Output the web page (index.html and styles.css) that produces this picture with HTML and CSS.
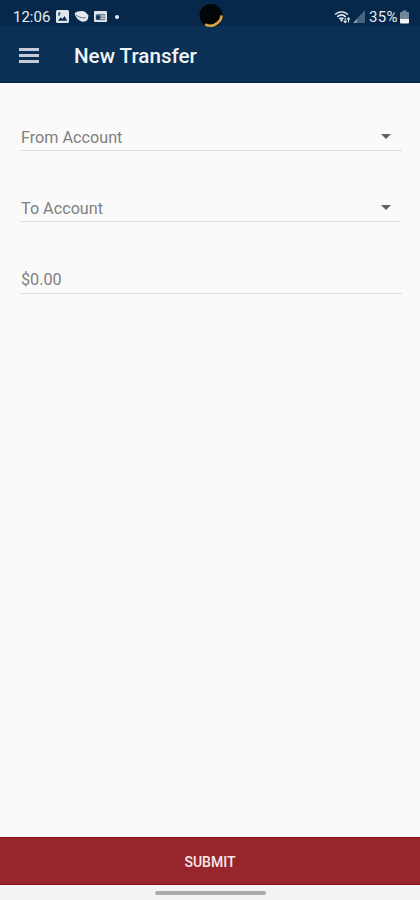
FILE: index.html
```html
<!DOCTYPE html>
<html lang="en">
<head>
  <meta charset="UTF-8" />
  <meta name="viewport" content="width=device-width, initial-scale=1" />
  <title>New Transfer</title>
  <link rel="stylesheet" href="styles.css">
</head>
<body>

  <!-- Status Bar -->
  <div class="status-bar">
    <span class="time">12:06</span>
    <svg class="icon-photo" width="13" height="13" viewBox="0 0 13 13" aria-hidden="true">
      <rect width="13" height="13" rx="1.5" fill="#dfe5ec"/>
      <path d="M2 10.8L4.7 7.2L6.4 9L8.5 6L11.2 10.8Z" fill="#0a2c4e"/>
      <path d="M2.2 2.2H4.4V5L2.2 6.5Z" fill="#52677f"/>
    </svg>
    <svg class="icon-app" width="15" height="13" viewBox="0 0 15 13" aria-hidden="true">
      <path d="M.5 3.5Q2.5 1 6 1.2Q9 .2 11.5 2.3L14.5 5.5L13.7 9.5Q11.5 12.5 7.5 11.5Q2.5 9.8 .5 3.5Z" fill="#e4e9ef"/>
      <path d="M2 4.5Q5 8.3 11.8 7.8" fill="none" stroke="#657a90" stroke-width="1"/>
    </svg>
    <svg class="icon-card" width="13" height="11" viewBox="0 0 13 11" aria-hidden="true">
      <rect width="13" height="11" rx="1" fill="#dfe5ec"/>
      <path d="M1.8 3H11.2V9.2H1.8Z" fill="#71849a"/>
      <path d="M2.2 4.5H5.8V8.5H2.2Z" fill="#0f3356"/>
      <path d="M7 5H10.7M7 7.3H10.7" stroke="#dfe5ec" stroke-width="1"/>
    </svg>
    <span class="dot"></span>

    <div class="status-right">
      <svg width="17" height="14" viewBox="0 0 17 14" aria-hidden="true">
        <path d="M1 4.5Q7.5-1 14 4.5M3.2 6.8Q7.5 3 11.8 6.8M5.2 9Q7.5 7 9.5 9" fill="none" stroke="#dfe5ec" stroke-width="1.6"/>
        <path d="M5.8 9.8L7.5 8.8L9 10L7.8 12Z" fill="#dfe5ec"/>
        <path d="M11.2 7.8V12.5M9.7 11L11.2 12.7L12.7 11M14.5 12.5V8M13 9.5L14.5 7.8L16 9.5" fill="none" stroke="#dfe5ec" stroke-width="1.1"/>
      </svg>
      <svg class="icon-signal" width="12" height="13" viewBox="0 0 12 13" aria-hidden="true">
        <path d="M0 13L12 0V13Z" fill="#48647e"/>
        <path d="M0 13L4 8.7V13Z" fill="#8799aa"/>
      </svg>
      <span class="percent">35%</span>
      <svg width="9" height="14" viewBox="0 0 9 14" aria-hidden="true">
        <path d="M0 3Q0 2 1 2H2.5V.5H6.5V2H8Q9 2 9 3V9H0Z" fill="#71869a"/>
        <path d="M0 9H9V12.5Q9 13.5 8 13.5H1Q0 13.5 0 12.5Z" fill="#f1f4f7"/>
      </svg>
    </div>

    <!-- Camera cutout -->
    <svg class="camera" width="26" height="28" viewBox="0 0 26 28" aria-hidden="true">
      <circle cx="13" cy="15.5" r="11.5" fill="#020609"/>
      <path d="M7.2 24.3Q14 28 20 22.5Q23.8 19 23.3 15.3" fill="none" stroke="#d9a441" stroke-width="2.6"/>
    </svg>
  </div>

  <header>
    <button class="menu" aria-label="Menu">
      <span></span>
      <span></span>
      <span></span>
    </button>
    <h1>New Transfer</h1>
  </header>

  <main>
    <div class="field">
      <span>From Account</span>
      <i class="caret"></i>
    </div>
    <div class="field field-to">
      <span>To Account</span>
      <i class="caret"></i>
    </div>
    <div class="field field-amount">
      <span>$0.00</span>
    </div>
  </main>

  <button class="submit">SUBMIT</button>

  <div class="gesture-bar">
    <div class="handle"></div>
  </div>

</body>
</html>
```
FILE: styles.css
```css
/* === Global Styles === */
* {
  box-sizing: border-box;
}

body {
  margin: 0;
  height: 100vh;
  font-family: Roboto, sans-serif;
  background: #fafafa;
  color: #808080;
  display: flex;
  flex-direction: column;
  overflow: hidden;
}

svg {
  display: block;
  flex: none;
}

button {
  border: none;
  font-family: inherit;
  cursor: pointer;
}

/* === Status Bar === */
.status-bar {
  position: relative;
  flex: none;
  height: 26px;
  padding: 7px 11px 0 13px;
  background: #06294b;
  color: #e6ebf1;
  display: flex;
  align-items: center;
}

.time {
  width: 38px;
  font-size: 15px;
  line-height: 20px;
}

.icon-photo {
  margin-left: 5px;
}

.icon-app {
  margin-left: 5px;
}

.icon-card {
  margin-left: 5px;
}

.dot {
  width: 4px;
  height: 4px;
  margin-left: 8px;
  border-radius: 50%;
  background: #e6ebf1;
}

.status-right {
  margin-left: auto;
  display: flex;
  align-items: center;
}

.icon-signal {
  margin-left: 2px;
}

.percent {
  width: 31px;
  margin-left: 4px;
  font-size: 15px;
  letter-spacing: 0.3px;
  line-height: 20px;
  white-space: nowrap;
}

.camera {
  position: absolute;
  top: 0;
  left: 198px;
}

/* === Header === */
header {
  flex: none;
  height: 57px;
  padding-left: 19px;
  background: #0a3155;
  border-bottom: 1px solid #08224a;
  display: flex;
  align-items: center;
}

.menu {
  width: 20px;
  margin-top: 2px;
  padding: 0;
  background: none;
  display: flex;
  flex-direction: column;
  gap: 3px;
}

.menu span {
  height: 3px;
  background: #c6cad9;
}

header h1 {
  margin: 3px 0 0 35px;
  font-size: 20.6px;
  font-weight: 500;
  line-height: 24px;
  color: #f2f4f8;
}

/* === Transfer Form === */
main {
  flex: 1;
  padding: 39px 18px 0 20px;
}

.field {
  height: 29px;
  margin-bottom: 42px;
  padding: 0 11px 0 1px;
  border-bottom: 1px solid #dedede;
  display: flex;
  align-items: flex-start;
  justify-content: space-between;
  font-size: 16.2px;
  line-height: 31px;
}

.field-to {
  margin-right: 2px;
  padding-right: 9px;
}

.field-amount {
  height: 30px;
}

.caret {
  margin-top: 12px;
  border-left: 5px solid transparent;
  border-right: 5px solid transparent;
  border-top: 5px solid #616161;
}

/* === Submit === */
.submit {
  flex: none;
  height: 48px;
  padding: 1px 0 0;
  background: #98242c;
  border-top: 1px solid #8e0d18;
  border-bottom: 1px solid #8e0d18;
  color: #f7e9ea;
  font-size: 14px;
  font-weight: 500;
}

.gesture-bar {
  flex: none;
  height: 15px;
  padding-top: 6px;
  background: #f3f3f3;
}

.handle {
  width: 111px;
  height: 4px;
  margin: 0 auto;
  border-radius: 2px;
  background: #ababab;
}
```
